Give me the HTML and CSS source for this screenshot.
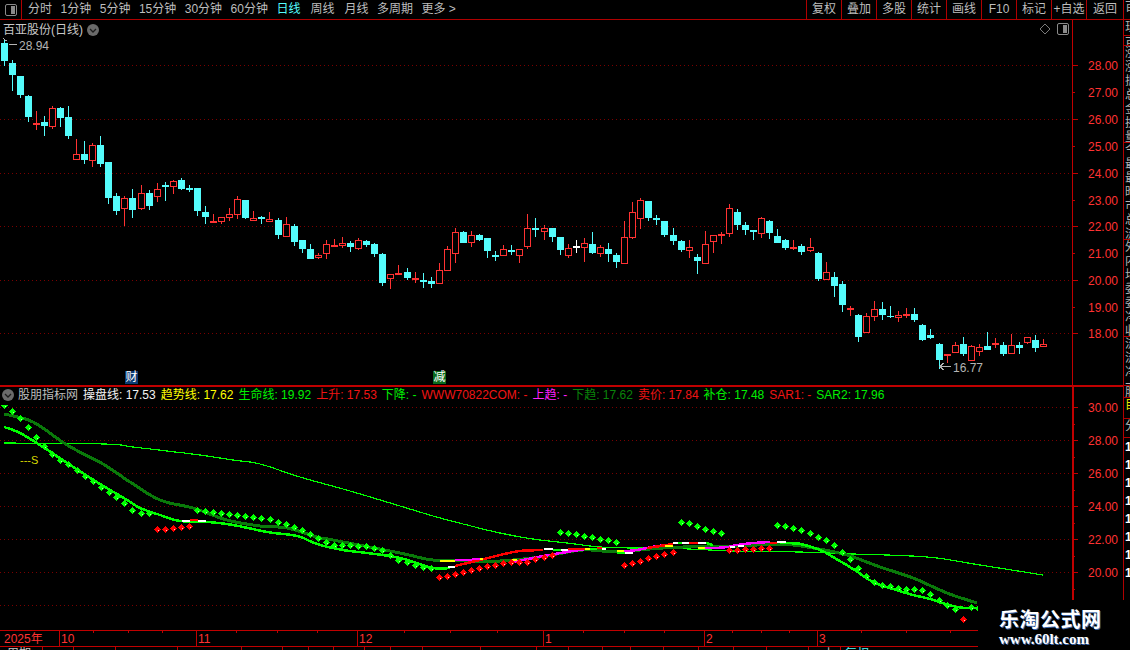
FILE: index.html
```html
<!DOCTYPE html>
<html lang="zh-CN">
<head>
<meta charset="utf-8">
<title>百亚股份(日线)</title>
<link rel="stylesheet" href="styles.css">
<script src="chart.js" defer></script>
</head>
<body>
<div class="app">
  <div class="workspace">
    <header class="topbar">
      <button class="layout-btn" type="button" aria-label="布局">
        <svg class="panel-icon" viewBox="0 0 12 12"><rect x="0.5" y="0.5" width="11" height="11" rx="1.5" class="panel-frame"/><rect x="6" y="2" width="4" height="8" class="panel-fill"/></svg>
      </button>
      <nav class="periods">
        <span>分时</span><span>1分钟</span><span>5分钟</span><span>15分钟</span><span>30分钟</span><span>60分钟</span>
        <span class="active wide">日线</span><span class="wide">周线</span><span>月线</span><span>多周期</span><span>更多 &gt;</span>
      </nav>
      <div class="tools">
        <span>复权</span><span>叠加</span><span>多股</span><span>统计</span><span>画线</span><span>F10</span><span>标记</span><span>+自选</span><span>返回</span>
      </div>
    </header>

    <section class="price-panel">
      <div class="plot">
        <div class="chart-title">
          <span>百亚股份(日线)</span>
          <svg class="chevron" viewBox="0 0 12 12"><circle cx="6" cy="6" r="6"/><path d="M3 5l3 3 3-3"/></svg>
        </div>
        <div class="chart-tools">
          <svg class="diamond" viewBox="0 0 12 12"><path d="M6 1l5 5-5 5-5-5z"/></svg>
          <svg class="panel-icon" viewBox="0 0 12 12"><rect x="0.5" y="0.5" width="11" height="11" rx="1.5" class="panel-frame"/><rect x="6" y="2" width="4" height="8" class="panel-fill"/></svg>
        </div>
        <svg id="price-chart" class="chart-svg price-svg" viewBox="0 20 1072 365" shape-rendering="crispEdges"></svg>
        <span class="event event-blue">财</span>
        <span class="event event-green">减</span>
      </div>
      <svg id="price-axis" class="axis-svg price-axis" viewBox="1072 20 51 365" shape-rendering="crispEdges"></svg>
    </section>

    <section class="indicator-panel">
      <div class="plot">
        <div class="legend">
          <svg class="chevron" viewBox="0 0 12 12"><circle cx="6" cy="6" r="6"/><path d="M3 5l3 3 3-3"/></svg>
          <span class="legend-name">股朋指标网</span>
          <span class="white">操盘线: 17.53</span>
          <span class="yellow">趋势线: 17.62</span>
          <span class="green">生命线: 19.92</span>
          <span class="red">上升: 17.53</span>
          <span class="green">下降: -</span>
          <span class="red">WWW70822COM: -</span>
          <span class="magenta">上趋: -</span>
          <span class="dark-green">下趋: 17.62</span>
          <span class="red">卖价: 17.84</span>
          <span class="green">补仓: 17.48</span>
          <span class="red">SAR1: -</span>
          <span class="green">SAR2: 17.96</span>
        </div>
        <svg id="indicator-chart" class="chart-svg indicator-svg" viewBox="0 405 1072 225" shape-rendering="crispEdges"></svg>
      </div>
      <svg id="indicator-axis" class="axis-svg indicator-axis" viewBox="1072 387 51 243" shape-rendering="crispEdges"></svg>
    </section>

    <svg id="time-axis" class="time-axis" viewBox="0 630 1123 20" shape-rendering="crispEdges"></svg>
  </div>

  <aside class="side">
    <div class="side-row r1">百亚股份</div>
    <div class="side-row r2">现价</div>
    <div class="side-row r3">百亚</div>
    <div class="side-row r4">涨跌<br>涨幅<br>振幅<br>总手<br>金额<br>换手<br>量比</div>
    <div class="side-row r5">今开<br>最高<br>最低<br>昨收<br>市盈<br>总股<br>流通</div>
    <div class="side-row r6">外盘<br>内盘<br>均价<br>委比<br>委差<br>净资<br>收益</div>
    <div class="side-row r7">流入<br>流出<br>净额<br>大单</div>
    <div class="side-row r8">股</div>
    <div class="side-row r9 side-yellow">目</div>
    <div class="side-row r10">分</div>
    <div class="side-row r11 side-bright">1<br>1<br>1<br>1<br>1<br>1<br>1<br>1</div>
  </aside>

  <div class="watermark">
    <div class="wm-title">乐淘公式网</div>
    <div class="wm-url">www.60lt.com</div>
  </div>
</div>
</body>
</html>
```

FILE: styles.css
```css
* { box-sizing: border-box; }

html, body {
  margin: 0;
  padding: 0;
  background: #000;
}

body {
  font-family: "Liberation Sans", "Noto Sans CJK SC", sans-serif;
  font-size: 12px;
  color: #bdbdbd;
}

.app {
  position: relative;
  display: flex;
  width: 1130px;
  height: 650px;
  overflow: hidden;
  background: #000;
}

.workspace {
  display: flex;
  flex-direction: column;
  width: 1123px;
  flex: none;
}

/* top bar */
.topbar {
  display: flex;
  align-items: stretch;
  height: 20px;
  flex: none;
  border-bottom: 1px solid #b00000;
  line-height: 19px;
}

.layout-btn {
  display: flex;
  align-items: center;
  justify-content: center;
  width: 22px;
  padding: 0;
  background: none;
  border: 0;
  border-right: 1px solid #b00000;
}

.panel-icon {
  display: block;
  width: 12px;
  height: 12px;
}

.panel-frame {
  fill: none;
  stroke: #8a8a8a;
}

.panel-fill {
  fill: #8a8a8a;
}

.periods {
  display: flex;
  gap: 8.5px;
  padding-left: 6px;
}

.periods .wide {
  margin-right: 1.5px;
}

.periods .active {
  color: #54fcfc;
}

.tools {
  display: flex;
  margin-left: auto;
}

.tools span {
  width: 35px;
  border-left: 1px solid #b00000;
  text-align: center;
  white-space: nowrap;
}

.tools span:last-child {
  width: 37px;
}

/* panels */
.price-panel {
  display: flex;
  height: 365px;
  flex: none;
}

.indicator-panel {
  display: flex;
  height: 245px;
  flex: none;
  border-top: 2px solid #c00000;
}

.plot {
  position: relative;
  width: 1072px;
  flex: none;
}

.chart-svg {
  display: block;
  width: 1072px;
}

.price-svg { height: 365px; }
.indicator-svg { height: 225px; }

.axis-svg {
  display: block;
  width: 51px;
  flex: none;
}

.price-axis { height: 365px; }
.indicator-axis { height: 243px; }

.axis-label {
  font-family: "Liberation Sans", sans-serif;
  font-size: 12px;
  fill: #ff3232;
}

.chart-title {
  position: absolute;
  left: 3px;
  top: 2px;
  display: flex;
  align-items: center;
  gap: 4px;
  line-height: 16px;
  color: #c8c8c8;
}

.chevron {
  display: block;
  width: 12px;
  height: 12px;
  flex: none;
}

.chevron circle { fill: #6a6a6a; }
.chevron path {
  fill: none;
  stroke: #1c1c1c;
  stroke-width: 1.3;
}

.chart-tools {
  position: absolute;
  right: 3px;
  top: 3px;
  display: flex;
  gap: 6px;
}

.diamond {
  display: block;
  width: 12px;
  height: 12px;
}

.diamond path {
  fill: none;
  stroke: #7a7a7a;
}

.event {
  position: absolute;
  top: 351px;
  width: 13px;
  height: 13px;
  font-size: 12px;
  line-height: 13px;
  text-align: center;
  color: #fff;
}

.event-blue {
  left: 125px;
  background: #0c3a72;
}

.event-green {
  left: 433px;
  background: #0b6a1c;
}

.extreme-label {
  font-family: "Liberation Sans", sans-serif;
  font-size: 12px;
  fill: #b4b4b4;
}

.s-label {
  font-family: "Liberation Sans", sans-serif;
  font-size: 11px;
  fill: #d8d800;
}

/* indicator legend */
.legend {
  display: flex;
  align-items: flex-start;
  gap: 5px;
  height: 18px;
  padding: 1px 0 0 2px;
  line-height: 14px;
  white-space: pre;
  overflow: hidden;
}

.legend .chevron {
  margin: 1px -1px 0 0;
}

.white { color: #f2f2f2; }
.yellow { color: #ffff00; }
.green { color: #00f000; }
.red { color: #f01414; }
.magenta { color: #ff20ff; }
.dark-green { color: #0a840a; }

/* time axis */
.time-axis {
  display: block;
  width: 1123px;
  height: 20px;
  flex: none;
}

.time-label {
  font-family: "Liberation Sans", "Noto Sans CJK SC", sans-serif;
  font-size: 12px;
  fill: #ff3232;
}

.clip-label {
  font-family: "Liberation Sans", "Noto Sans CJK SC", sans-serif;
  font-size: 12px;
  fill: #c8c8c8;
}

.clip-cyan { fill: #54fcfc; }

/* clipped right hand quote column */
.side {
  display: flex;
  flex-direction: column;
  width: 7px;
  flex: none;
  border-left: 1px solid #b00000;
  overflow: hidden;
}

.side-row {
  flex: none;
  padding-left: 1px;
  overflow: hidden;
  white-space: nowrap;
  line-height: 14px;
  color: #b4b4b4;
  border-bottom: 1px solid #b00000;
}

.r1 { height: 20px; }
.r2 { height: 16px; }
.r3 { height: 10px; }
.r4 { height: 97px; }
.r5 { height: 97px; }
.r6 { height: 97px; }
.r7 { height: 49px; }
.r8 { height: 12px; }
.r9 { height: 21px; }
.r10 { height: 19px; }
.r11 { height: 162px; border-bottom: 0; line-height: 18px; }

.side-yellow { color: #e8e800; }
.side-bright { color: #fff; font-weight: 700; }

/* watermark */
.watermark {
  position: absolute;
  left: 978px;
  top: 600px;
  width: 152px;
  height: 50px;
  padding: 8px 0 0 21px;
  background: #000;
  color: #fff;
}

.wm-title {
  font-family: "Noto Sans CJK SC", sans-serif;
  font-size: 20px;
  font-weight: 700;
  line-height: 22px;
  letter-spacing: 0.5px;
  text-shadow: 1px 1px 0 #3a64a8;
}

.wm-url {
  font-family: "Liberation Serif", serif;
  font-size: 15px;
  font-weight: 700;
  line-height: 16px;
  margin-top: 1px;
  text-shadow: 1px 1px 0 #3a64a8;
}
```

FILE: chart.js
```js
var NS = 'http://www.w3.org/2000/svg';

function el(parent, name, attrs, text) {
  var n = document.createElementNS(NS, name);
  for (var k in attrs) n.setAttribute(k, attrs[k]);
  if (text !== undefined) n.textContent = text;
  parent.appendChild(n);
  return n;
}

/* colour, wick top, body top, body bottom, wick bottom (screen y) */
var candles = [
  'c40,43,61,66','c60,63,75,91','c76,76,95,98','c95,96,117,122','r111,123,125,130',
  'c116,122,126,136','r106,108,127,129','c107,108,118,127','c106,117,136,139','r139,154,160,160',
  'c141,154,160,164','r143,145,161,167','c136,145,164,167','c162,162,198,204','c193,196,211,215',
  'r196,198,209,226','c189,198,210,218','r185,193,209,210','c190,193,206,210','r183,189,197,202',
  'c182,185,187,201','r180,181,187,194','c178,180,189,190','c185,188,190,192','c188,188,211,216',
  'c206,212,217,224','r214,221,223,223','r217,217,222,224','r208,214,218,221','r196,199,215,219',
  'c200,200,218,219','r211,218,221,221','c216,217,219,224','r212,219,222,222','c218,220,235,239',
  'r217,224,237,237','c224,226,242,246','c240,240,249,253','c244,249,259,259','r253,255,258,259',
  'r240,244,254,259','r239,245,247,247','r237,243,246,248','c241,243,247,252','r238,240,249,250',
  'c240,241,245,247','c243,244,254,257','c253,254,283,286','r274,274,279,289','r265,273,275,275',
  'c268,272,278,280','r272,278,280,283','c273,280,282,288','c277,281,284,288','r263,270,284,284',
  'r246,249,271,271','r228,232,254,263','c231,232,243,243','r231,235,243,247','c234,235,240,241',
  'c238,238,251,258','c251,255,257,261','r245,249,256,256','c245,250,252,255','r249,249,256,263',
  'r214,228,247,249','c218,228,230,237','r225,228,232,240','c228,228,237,242','c237,237,250,255',
  'r244,248,256,258','w240,246,248,253','r238,243,248,262','c232,244,253,254','r245,247,254,257',
  'c243,249,254,262','c253,255,262,268','r221,237,264,264','r202,212,238,239','r198,200,219,229',
  'c201,201,218,221','c215,218,220,225','c221,221,235,237','c228,235,241,245','c240,241,250,252',
  'r240,247,251,258','c254,257,261,274','r231,244,264,264','r235,235,242,253','r232,234,236,244',
  'r204,208,234,237','c209,212,225,230','c222,225,230,235','c230,230,232,240','r217,218,234,238',
  'c220,221,233,239','c229,236,243,243','c239,240,248,250','r240,247,249,250','c244,246,252,255',
  'r238,247,251,252','c252,253,279,281','r262,272,280,280','c272,277,286,297','c281,284,305,312',
  'r306,308,310,316','c314,315,337,342','r313,316,333,333','r301,309,317,321','c302,309,315,320',
  'c306,316,317,318','r311,315,318,322','r308,314,316,318','c308,314,320,322','c324,325,340,341',
  'c329,335,338,339','c343,344,360,369','r354,354,356,363','r342,345,353,353','c337,344,354,356',
  'r345,346,361,361','r344,347,352,356','c332,346,350,350','r338,343,345,348','c342,345,354,356',
  'r334,345,354,354','c342,345,348,354','r337,337,343,344','c335,340,348,352','r339,344,347,347'
];

var COLORS = { r: '#ff3232', c: '#54fcfc', w: '#ffffff' };

function candleX(i) {
  return 4 + 8 * i + Math.floor(i / 16.57);
}

function gridLine(svg, y) {
  el(svg, 'line', {
    x1: 0, x2: 1072, y1: y + 0.5, y2: y + 0.5,
    stroke: '#7a0000', 'stroke-dasharray': '1 3'
  });
}

function drawPrice() {
  var svg = document.getElementById('price-chart');
  [65, 119, 173, 226, 280, 333].forEach(function (y) { gridLine(svg, y); });
  candles.forEach(function (s, i) {
    var color = COLORS[s.charAt(0)];
    var p = s.slice(1).split(',').map(Number);
    var cx = candleX(i);
    el(svg, 'rect', { x: cx, y: p[0], width: 1, height: p[3] - p[0], fill: color });
    var h = p[2] - p[1];
    if (s.charAt(0) === 'r' && h > 2) {
      el(svg, 'rect', { x: cx - 2.5, y: p[1] + 0.5, width: 6, height: h - 1, fill: '#000', stroke: color });
    } else {
      el(svg, 'rect', { x: cx - 3, y: p[1], width: 7, height: h, fill: color });
    }
  });
  el(svg, 'path', { d: 'M9 44.5H17M3.5 38.5L6.5 41', stroke: '#b4b4b4', fill: 'none' });
  el(svg, 'text', { x: 19, y: 50, 'class': 'extreme-label' }, '28.94');
  el(svg, 'path', { d: 'M940 366.5H951M943.5 363L940 366.5L943.5 370', stroke: '#b4b4b4', fill: 'none' });
  el(svg, 'text', { x: 953, y: 372, 'class': 'extreme-label' }, '16.77');
}

function drawAxis(id, top, bottom, lineW, ticks) {
  var svg = document.getElementById(id);
  el(svg, 'rect', { x: 1072, y: top, width: lineW, height: bottom - top, fill: '#c00000' });
  ticks.forEach(function (t) {
    el(svg, 'rect', { x: 1072, y: t[0], width: t[2] ? 6 : 3, height: 1, fill: '#c00000' });
    if (t[1]) {
      el(svg, 'text', { x: 1118, y: t[0] + 5, 'text-anchor': 'end', 'class': 'axis-label' }, t[1]);
    }
  });
}

/* Catmull-Rom resampling keeps the averaged lines free of corners. */
function smooth(pts) {
  var out = [];
  for (var i = 0; i < pts.length - 1; i++) {
    var p0 = pts[Math.max(i - 1, 0)], p1 = pts[i], p2 = pts[i + 1], p3 = pts[Math.min(i + 2, pts.length - 1)];
    for (var s = 0; s < 6; s++) {
      var t = s / 6, t2 = t * t, t3 = t2 * t;
      out.push([
        0.5 * (2 * p1[0] + (p2[0] - p0[0]) * t + (2 * p0[0] - 5 * p1[0] + 4 * p2[0] - p3[0]) * t2 + (3 * p1[0] - p0[0] - 3 * p2[0] + p3[0]) * t3),
        0.5 * (2 * p1[1] + (p2[1] - p0[1]) * t + (2 * p0[1] - 5 * p1[1] + 4 * p2[1] - p3[1]) * t2 + (3 * p1[1] - p0[1] - 3 * p2[1] + p3[1]) * t3)
      ]);
    }
  }
  out.push(pts[pts.length - 1]);
  return out;
}

function poly(svg, pts, color, width) {
  el(svg, 'polyline', {
    points: smooth(pts).map(function (p) { return p[0].toFixed(1) + ',' + p[1].toFixed(1); }).join(' '),
    fill: 'none', stroke: color, 'stroke-width': width
  });
}

function seg(svg, x1, x2, y, color) {
  el(svg, 'rect', { x: x1, y: y - 1, width: x2 - x1, height: 2, fill: color });
}

function dot(svg, x, y, color) {
  var r = 3;
  var points = x + ',' + (y - r) + ' ' + (x + r + 1) + ',' + y + ' ' + x + ',' + (y + r + 1) + ' ' + (x - r) + ',' + y;
  el(svg, 'polygon', { points: points, fill: color });
  el(svg, 'rect', { x: x + 1, y: y + 1, width: 1, height: 1, fill: color === '#ff0000' ? '#ffd0d0' : '#a0ffa0' });
}

function drawIndicator() {
  var svg = document.getElementById('indicator-chart');
  [407, 440, 473, 506, 539, 572, 605].forEach(function (y) { gridLine(svg, y); });

  poly(svg, [[4,443],[105,444],[133,447],[167,451],[200,455],[233,460],[260,464],[300,477],[350,491],[400,506],[433,516],[467,525],[500,533],[533,539],[567,543],[600,547],[633,548],[667,548],[733,551],[800,552],[853,554],[927,557],[980,565],[1043,575]], '#00ff00', 1.2);

  poly(svg, [[4,414],[33,422],[67,445],[103,464],[130,482],[160,500],[193,508],[227,520],[260,526],[287,528],[317,537],[333,540],[400,553],[433,560],[470,561],[500,561],[540,557],[583,550],[617,552],[650,549],[683,547],[740,546],[780,544],[813,548],[847,555],[880,567],[913,578],[947,593],[977,603]], '#0a7a0a', 3);

  poly(svg, [[4,427],[20,433],[43,447],[67,463],[100,484],[127,500],[140,508],[160,515],[180,521],[207,522],[233,525],[267,532],[297,536],[317,544],[343,550],[367,553],[400,558],[433,568],[450,568]], '#00ff00', 2.5);
  poly(svg, [[780,543],[800,544],[820,550],[833,557],[853,569],[873,582],[890,588],[913,595],[930,599],[957,607],[977,608]], '#00ff00', 2.5);

  poly(svg, [[455,566],[480,560],[500,555],[520,551],[543,550]], '#ff0000', 2.5);
  poly(svg, [[513,562],[533,558],[555,554],[573,551],[585,549]], '#ff00ff', 2.5);
  poly(svg, [[624,551],[637,550],[657,546],[665,546]], '#ff00ff', 2.5);
  poly(svg, [[647,548],[660,546],[673,544]], '#ff0000', 2.5);
  poly(svg, [[715,548],[728,547],[737,545],[753,543],[770,542]], '#ff00ff', 2.5);
  poly(svg, [[706,543],[713,545]], '#00ff00', 2.5);

  [[182,190,521,'#fff'],[190,198,520,'#f00'],[198,206,521,'#fff'],
   [440,455,561,'#ff0'],[455,472,560,'#f0f'],[472,480,559,'#f0f'],[480,483,559,'#ff0'],
   [448,455,567,'#fff'],[512,517,560,'#ff0'],
   [544,553,549,'#fff'],[553,561,550,'#0f0'],[561,568,550,'#fff'],[568,585,549,'#f00'],
   [585,590,549,'#ff0'],[590,597,549,'#0f0'],[597,602,548,'#f00'],[602,606,549,'#fff'],
   [617,625,553,'#0f0'],[625,633,553,'#fff'],[617,624,551,'#ff0'],
   [665,673,546,'#ff0'],[673,678,543,'#fff'],[678,682,543,'#0f0'],[682,689,543,'#fff'],
   [689,698,543,'#f00'],[698,706,543,'#fff'],[698,705,548,'#ff0'],[705,715,548,'#f0f'],
   [730,735,547,'#fff'],[738,744,546,'#fff'],[770,777,543,'#f00'],[777,786,542,'#fff'],[786,800,543,'#0f0']
  ].forEach(function (s) { seg(svg, s[0], s[1], s[2], s[3]); });

  var GREEN = '#00ff00', RED = '#ff0000';
  [[4,405],[12,411],[20,418],[28,427],[36,437],[44,446],[52,454],[60,460],[68,464],[77,470],[85,476],[93,481],[101,487],[109,492],[116,497],[124,503],[132,510],[141,513],[149,513]]
    .forEach(function (d) { dot(svg, d[0], d[1], GREEN); });

  function group(x0, list, color) {
    list.forEach(function (d) {
      dot(svg, Math.round(x0 + d[0] / 3), Math.round(500 + d[1] / 3), color);
    });
  }

  group(0, [[591,30],[615,33],[639,36],[663,39],[687,42],[711,45],[735,48],[759,51],[783,54],[810,57],[834,66],[858,72],[882,81],[906,90],[930,102],[954,114],[978,126],[1002,135],[1026,134],[1050,135],[1074,137],[1098,138],[1122,144],[1146,150],[1170,165],[1194,179]], GREEN);
  group(400, [[21,186],[45,195],[69,201],[93,204]], GREEN);
  group(0, [[471,87],[495,87],[519,84],[543,81],[567,78]], RED);
  group(400, [[117,231],[141,228],[165,222],[189,216],[213,210],[237,204],[261,198],[285,195],[309,189],[333,186],[357,186],[381,186],[405,177],[432,171],[456,165]], RED);
  group(400, [[480,96],[504,99],[528,102],[552,108],[576,111],[600,117],[624,120],[648,126]], GREEN);
  group(400, [[672,195],[696,189],[720,183],[744,174],[768,168],[792,162],[819,156]], RED);
  group(400, [[843,66],[867,69],[891,78],[915,87],[939,93],[963,99]], GREEN);
  group(400, [[987,150],[1011,150],[1035,147],[1059,147],[1083,144],[1107,144]], RED);
  group(400, [[1131,75]], GREEN);
  group(780, [[14,78],[38,84],[62,90],[89,99],[113,111],[137,120],[161,135],[185,156],[209,177],[233,204],[257,228],[281,246],[305,255],[329,258],[353,264],[377,267],[401,267],[425,270],[449,282],[476,300],[500,315],[524,327],[572,321],[593,324]], GREEN);
  group(780, [[548,357]], RED);

  el(svg, 'text', { x: 20, y: 464, 'class': 's-label' }, '---S');
}

function drawTime() {
  var svg = document.getElementById('time-axis');
  var LINE = '#c00000';
  el(svg, 'rect', { x: 0, y: 630, width: 1123, height: 1, fill: LINE });
  el(svg, 'rect', { x: 0, y: 646, width: 1123, height: 1, fill: LINE });
  [59,196,357,543,704,817].forEach(function (x) {
    el(svg, 'rect', { x: x, y: 630, width: 1, height: 16, fill: LINE });
  });
  [93,128,162,236,277,317,404,450,497,583,624,664,732,761,789,861,906,950].forEach(function (x) {
    el(svg, 'rect', { x: x, y: 631, width: 1, height: 2, fill: LINE });
  });
  [42,73,115,177,241,282,308,333,364,390,422,480,536,568,602,630,663,698,733,766,808,840].forEach(function (x) {
    el(svg, 'rect', { x: x, y: 647, width: 1, height: 3, fill: LINE });
  });
  [[4,'2025年'],[61,'10'],[198,'11'],[359,'12'],[545,'1'],[706,'2'],[819,'3']].forEach(function (t) {
    el(svg, 'text', { x: t[0], y: 643, 'class': 'time-label' }, t[1]);
  });
  el(svg, 'text', { x: 7, y: 658, 'class': 'clip-label' }, '周期');
  el(svg, 'text', { x: 823, y: 658, 'class': 'clip-label' }, '上');
  el(svg, 'text', { x: 845, y: 658, 'class': 'clip-label clip-cyan' }, '复权');
}

drawPrice();
drawAxis('price-axis', 20, 385, 1, [
  [65,'28.00',1],[92,'27.00',0],[119,'26.00',1],[146,'25.00',0],[173,'24.00',1],[200,'23.00',0],
  [226,'22.00',1],[253,'21.00',0],[280,'20.00',1],[307,'19.00',0],[333,'18.00',1]
]);
drawIndicator();
drawAxis('indicator-axis', 387, 630, 2, [
  [407,'30.00',1],[424,'',0],[440,'28.00',1],[457,'',0],[473,'26.00',1],[490,'',0],
  [506,'24.00',1],[523,'',0],[539,'22.00',1],[556,'',0],[572,'20.00',1],[589,'',0]
]);
drawTime();
```
